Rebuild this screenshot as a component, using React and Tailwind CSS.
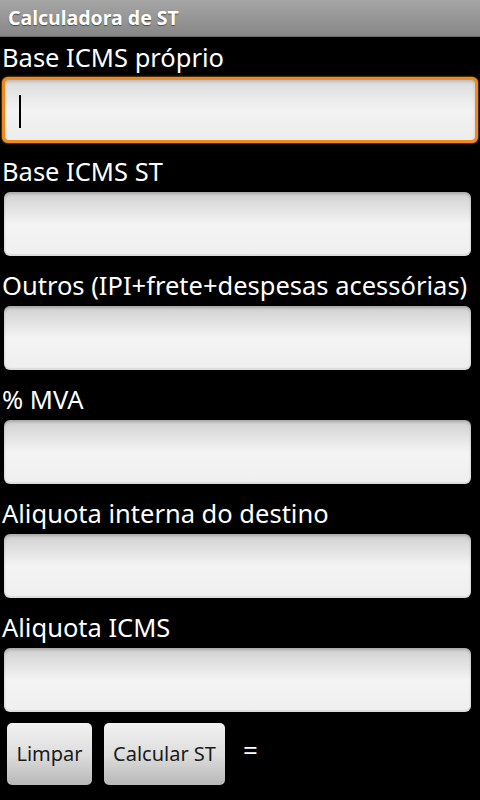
import React from "react";

const fields = [
  "Base ICMS próprio",
  "Base ICMS ST",
  "Outros (IPI+frete+despesas acessórias)",
  "% MVA",
  "Aliquota interna do destino",
  "Aliquota ICMS",
];

function Field({ label, focused }) {
  return (
    <div className="flex flex-col">
      <div className="h-[33px] pl-[2px] text-[25.5px] leading-[33px] text-white whitespace-nowrap">
        {label}
      </div>
      <div className="mt-[3px] h-[66px] mb-[12px]">
        {focused ? (
          <div className="mx-[2px] h-[66px] rounded-[6px] bg-[#f08a1c] p-[3px] shadow-[0_0_2px_#ffb040]">
            <div className="relative h-full rounded-[4px] bg-gradient-to-b from-[#dcdcdc] via-[#f3f3f3] to-[#ececec] shadow-[inset_0_2px_3px_rgba(0,0,0,0.15)]">
              <div className="absolute left-[14px] top-[15px] h-[33px] w-[2px] bg-black" />
            </div>
          </div>
        ) : (
          <div className="mx-[4px] mt-[1px] h-[64px] w-[467px] rounded-[6px] bg-gradient-to-b from-[#d0d0d0] via-[#f4f4f4] to-[#efefef] shadow-[inset_0_2px_3px_rgba(0,0,0,0.2),inset_0_-2px_1px_rgba(0,0,0,0.08)]" />
        )}
      </div>
    </div>
  );
}

export default function App() {
  return (
    <div className="w-[480px] h-[800px] bg-black overflow-hidden font-['Noto_Sans','Open_Sans',sans-serif]">
      {/* Title bar */}
      <div className="h-[37px] bg-gradient-to-b from-[#a6a6a6] to-[#878787] border-b border-[#6a6a6a] pl-[8px] flex items-center">
        <span className="text-[19.5px] font-bold text-white [text-shadow:0_1px_1px_rgba(0,0,0,0.5)]">
          Calculadora de ST
        </span>
      </div>

      <div className="pt-[4px]">
        {fields.map((f, i) => (
          <Field key={f} label={f} focused={i === 0} />
        ))}
      </div>

      {/* Buttons */}
      <div className="-mt-[2px] flex items-center gap-[12px] pl-[7px]">
        <button className="h-[62px] w-[85px] rounded-[5px] bg-gradient-to-b from-[#f2f2f2] via-[#dedede] to-[#b8b8b8] text-[20px] text-[#1a1a1a]">
          Limpar
        </button>
        <button className="h-[62px] w-[121px] rounded-[5px] bg-gradient-to-b from-[#f2f2f2] via-[#dedede] to-[#b8b8b8] text-[20px] text-[#1a1a1a]">
          Calcular ST
        </button>
        <span className="ml-[6px] -mt-[8px] text-[26px] text-white">=</span>
      </div>
    </div>
  );
}
